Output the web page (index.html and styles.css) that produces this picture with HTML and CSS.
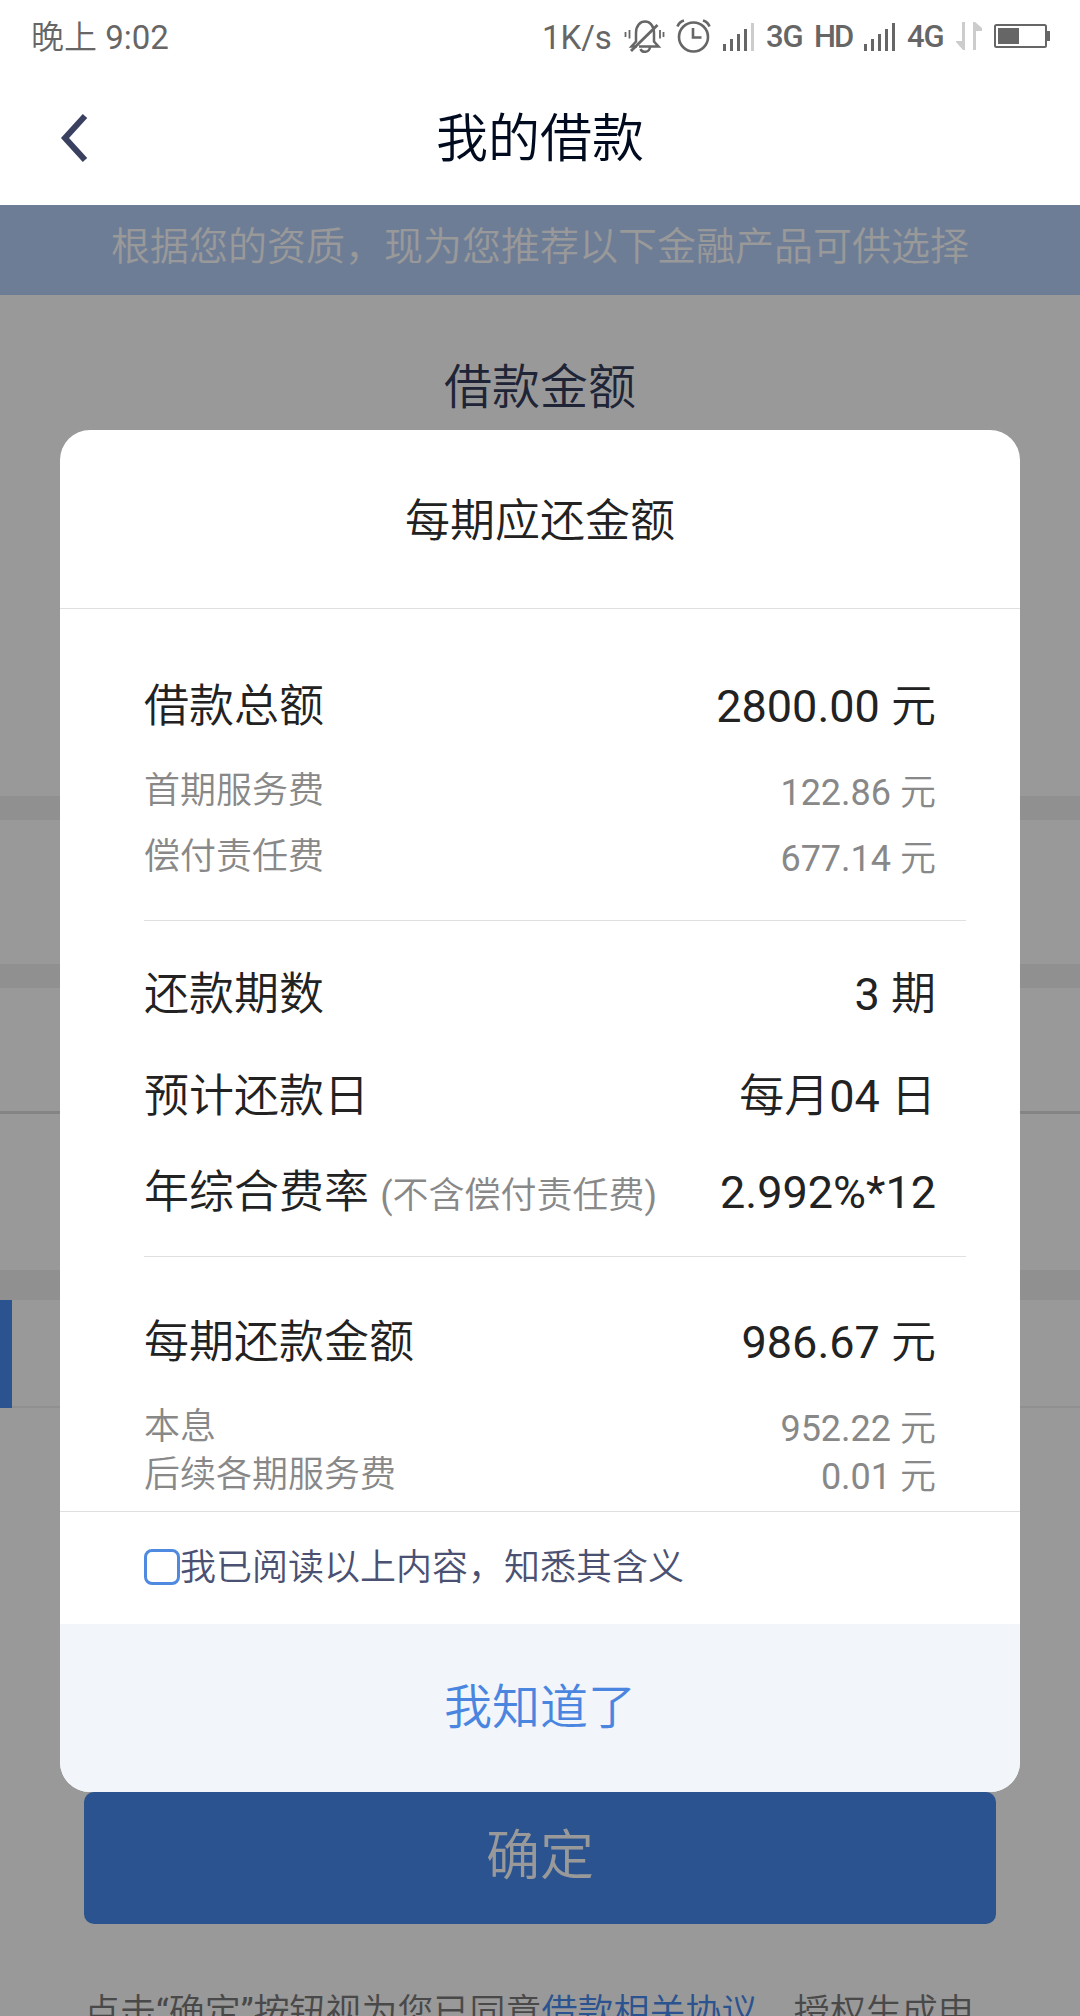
FILE: index.html
```html
<!DOCTYPE html>
<html lang="zh-CN">
<head>
  <meta charset="UTF-8" />
  <meta name="viewport" content="width=device-width, initial-scale=1.0"/>
  <title>我的借款</title>
  <link rel="stylesheet" href="styles.css">
</head>
<body>

  <!-- Status bar -->
  <div class="status-bar">
    <span class="time">晚上 9:02</span>
    <div class="status-icons">
      <span class="speed">1K/s</span>
      <svg class="bell" width="42" height="40" viewBox="0 0 42 40" fill="none" stroke="#666" stroke-width="2.5">
        <path d="M13 29.500 H7.500 L12 24.500 V16 C12 0.700 30 0.700 30 16 V24.500 L34.500 29.500 H15" />
        <path d="M7 34 L33.500 8" stroke-width="2.800" />
        <path d="M16.500 32 C18 36 25.500 36 26 30" />
        <path d="M1.500 15 V20 M5.500 13 V21.500 M36 13 V21.500 M39.500 15 V20" stroke-width="1.800" />
      </svg>
      <svg class="alarm" width="36" height="36" viewBox="0 0 36 36" fill="none" stroke="#666" stroke-width="2.6">
        <circle cx="17.500" cy="18" r="14.500" />
        <path d="M17 9 V18.500 H25.500" />
        <path d="M1.500 7.500 Q3 3 8 1.500 M33.500 7.500 Q32 3 27 1.500" />
      </svg>
      <svg class="signal" width="32" height="28" viewBox="0 0 32 28" fill="#666">
        <path d="M0 21h3v7H0zM7 16h3v12H7zM14 11h3v17h-3zM21 6h3v22h-3z" />
        <path d="M28 0h3v28h-3z" fill="#ccc" />
      </svg>
      <span class="net net-3g">3G</span>
      <span class="net net-hd">HD</span>
      <svg class="signal signal-full" width="32" height="28" viewBox="0 0 32 28" fill="#666">
        <path d="M0 21h3v7H0zM7 16h3v12H7zM14 11h3v17h-3zM21 6h3v22h-3zM28 0h3v28h-3z" />
      </svg>
      <span class="net net-4g">4G</span>
      <svg class="arrows" width="28" height="30" viewBox="0 0 28 30" fill="#ccc">
        <path d="M6 0h3v28H7L0 20v-1h6z" />
        <path d="M17 28V0h2l7 6v3h-6v19z" />
      </svg>
      <svg class="battery" width="56" height="26" viewBox="0 0 56 26">
        <rect x="1" y="1" width="51" height="22" rx="1.500" fill="none" stroke="#666" stroke-width="2" />
        <path d="M4 4h21v16H4z" fill="#666" />
        <path d="M53 7h3v10h-3z" fill="#666" />
      </svg>
    </div>
  </div>

  <!-- Title bar -->
  <header class="header">
    <svg class="back" width="30" height="50" viewBox="0 0 30 50" fill="none" stroke="#3a4160" stroke-width="6">
      <path d="M25 3 L5 25 L25 47" />
    </svg>
    <h1>我的借款</h1>
  </header>

  <!-- Loan page, covered by the mask -->
  <main class="page">
    <div class="notice">根据您的资质，现为您推荐以下金融产品可供选择</div>
    <section class="amount">
      <h2>借款金额</h2>
    </section>
    <div class="cell cell-period"></div>
    <div class="cell cell-use"></div>
    <div class="cell cell-bank"></div>
    <div class="tab-row"><i class="tab-mark"></i></div>
    <section class="submit">
      <button class="confirm-btn">确定</button>
      <p class="agreement">点击“确定”按钮视为您已同意<a>借款相关协议</a>，授权生成申</p>
    </section>

    <div class="mask">
      <div class="modal">
        <h3 class="modal-title">每期应还金额</h3>
        <div class="modal-body">
          <div class="group group-total">
            <div class="row"><span>借款总额</span><span>2800.00 元</span></div>
            <div class="row sub"><span>首期服务费</span><span class="num">122.86 元</span></div>
            <div class="row sub"><span>偿付责任费</span><span class="num">677.14 元</span></div>
          </div>
          <div class="group group-plan">
            <div class="row"><span>还款期数</span><span>3 期</span></div>
            <div class="row"><span>预计还款日</span><span>每月04 日</span></div>
            <div class="row rate"><span>年综合费率 <small>(不含偿付责任费)</small></span><span>2.992%*12</span></div>
          </div>
          <div class="group group-each">
            <div class="row"><span>每期还款金额</span><span>986.67 元</span></div>
            <div class="row sub"><span>本息</span><span class="num">952.22 元</span></div>
            <div class="row sub"><span>后续各期服务费</span><span class="num">0.01 元</span></div>
          </div>
        </div>
        <label class="read"><i class="checkbox"></i><span>我已阅读以上内容，知悉其含义</span></label>
        <button class="modal-btn">我知道了</button>
      </div>
    </div>
  </main>

</body>
</html>
```

FILE: styles.css
```css
* {
  box-sizing: border-box;
  margin: 0;
  padding: 0;
}

body {
  width: 1080px;
  height: 2016px;
  overflow: hidden;
  background: #fff;
  font-family: Roboto, "Noto Sans CJK SC DemiLight", "Noto Sans CJK SC", sans-serif;
  font-weight: 400;
  color: #222;
}

h1, h2, h3 {
  font-weight: 400;
}

button {
  border: none;
  font-family: inherit;
}

svg {
  display: block;
  flex: none;
}

/* status bar */
.status-bar {
  display: flex;
  justify-content: space-between;
  height: 74px;
  padding: 0 30px 0 31px;
  color: #666;
  font-size: 33px;
  line-height: 75px;
  white-space: nowrap;
}

.status-icons {
  display: flex;
  align-items: center;
}

.speed {
  width: 82px;
}

.bell {
  margin-right: 10px;
}

.alarm {
  margin-right: 11px;
}

.net {
  font-size: 31px;
  font-weight: 500;
  letter-spacing: -1px;
  line-height: 72px;
}

.net-3g {
  width: 48px;
  margin-left: 11px;
}

.net-hd {
  width: 50px;
  letter-spacing: -2px;
}

.net-4g {
  width: 49px;
  margin-left: 11px;
}

.arrows {
  margin-right: 10px;
}

/* header */
.header {
  display: flex;
  align-items: center;
  height: 131px;
  padding: 0 58px 4px 60px;
}

.header h1 {
  flex: 1;
  margin-right: 32px;
  padding-top: 4px;
  text-align: center;
  color: #000b20;
  font-size: 52px;
  line-height: 123px;
}

/* page */
.page {
  position: relative;
  height: 1811px;
  overflow: hidden;
}

.notice {
  height: 90px;
  background: #b7d0fb;
  color: #fff;
  font-size: 39px;
  line-height: 84px;
  text-align: center;
}

.amount {
  height: 501px;
  padding-top: 58px;
  text-align: center;
}

.amount h2 {
  color: #353c5a;
  font-size: 48px;
  line-height: 70px;
}

.cell-period {
  height: 168px;
  border-top: 24px solid #f0f0f0;
}

.cell-use {
  height: 150px;
  border-top: 24px solid #f0f0f0;
  border-bottom: 3px solid #dcdcdc;
}

.cell-bank {
  height: 186px;
  border-bottom: 30px solid #f0f0f0;
}

.tab-row {
  height: 108px;
  border-bottom: 2px solid #f0f0f0;
}

.tab-mark {
  display: block;
  width: 12px;
  height: 108px;
  background: #468af0;
}

.submit {
  padding: 384px 84px 0;
}

.confirm-btn {
  display: block;
  width: 912px;
  height: 132px;
  padding-bottom: 13px;
  border-radius: 10px;
  background: #468af0;
  color: #fff;
  font-size: 54px;
}

.agreement {
  margin-top: 62px;
  color: #7a7a7a;
  font-size: 36px;
  line-height: 54px;
  white-space: nowrap;
}

.agreement a {
  color: #468af0;
}

/* modal */
.mask {
  position: absolute;
  top: 0;
  left: 0;
  width: 100%;
  height: 100%;
  padding-top: 225px;
  background: rgba(0,0,0,0.4);
}

.modal {
  width: 960px;
  height: 1362px;
  margin: 0 auto;
  overflow: hidden;
  border-radius: 30px;
  background: #fff;
}

.modal-title {
  height: 179px;
  border-bottom: 1px solid #e0e0e0;
  font-size: 45px;
  line-height: 183px;
  text-align: center;
}

.modal-body {
  height: 903px;
  padding-left: 84px;
  border-bottom: 1px solid #e0e0e0;
}

.group {
  width: 822px;
  padding-right: 30px;
  border-bottom: 1px solid #e0e0e0;
}

.row {
  display: flex;
  justify-content: space-between;
  height: 66px;
  font-size: 45px;
  line-height: 66px;
  white-space: nowrap;
}

.row small {
  color: #888;
  font-size: 36px;
}

.sub {
  color: #888;
  font-size: 36px;
}

.num {
  padding-top: 2px;
}

.group-total {
  height: 312px;
  padding-top: 65px;
}

.group-total .row:first-child {
  margin-bottom: 18px;
}

.group-plan {
  height: 336px;
  padding-top: 41px;
}

.group-plan .row {
  margin-bottom: 36px;
}

.group-plan .rate {
  margin-top: -6px;
}

.group-each {
  padding-top: 53px;
  border-bottom: none;
}

.group-each .row:first-child {
  margin-bottom: 27px;
}

.group-each .sub {
  height: 48px;
  line-height: 48px;
}

.read {
  display: flex;
  align-items: center;
  height: 112px;
  padding-left: 84px;
  color: #4a5173;
  font-size: 36px;
}

.read span {
  padding-bottom: 8px;
}

.checkbox {
  width: 36px;
  height: 36px;
  margin-bottom: 2px;
  border: 3px solid #4f8ae0;
  border-radius: 8px;
}

.modal-btn {
  display: block;
  width: 100%;
  height: 168px;
  padding-bottom: 11px;
  background: #f2f5f9;
  color: #4a86e0;
  font-size: 48px;
}
```
